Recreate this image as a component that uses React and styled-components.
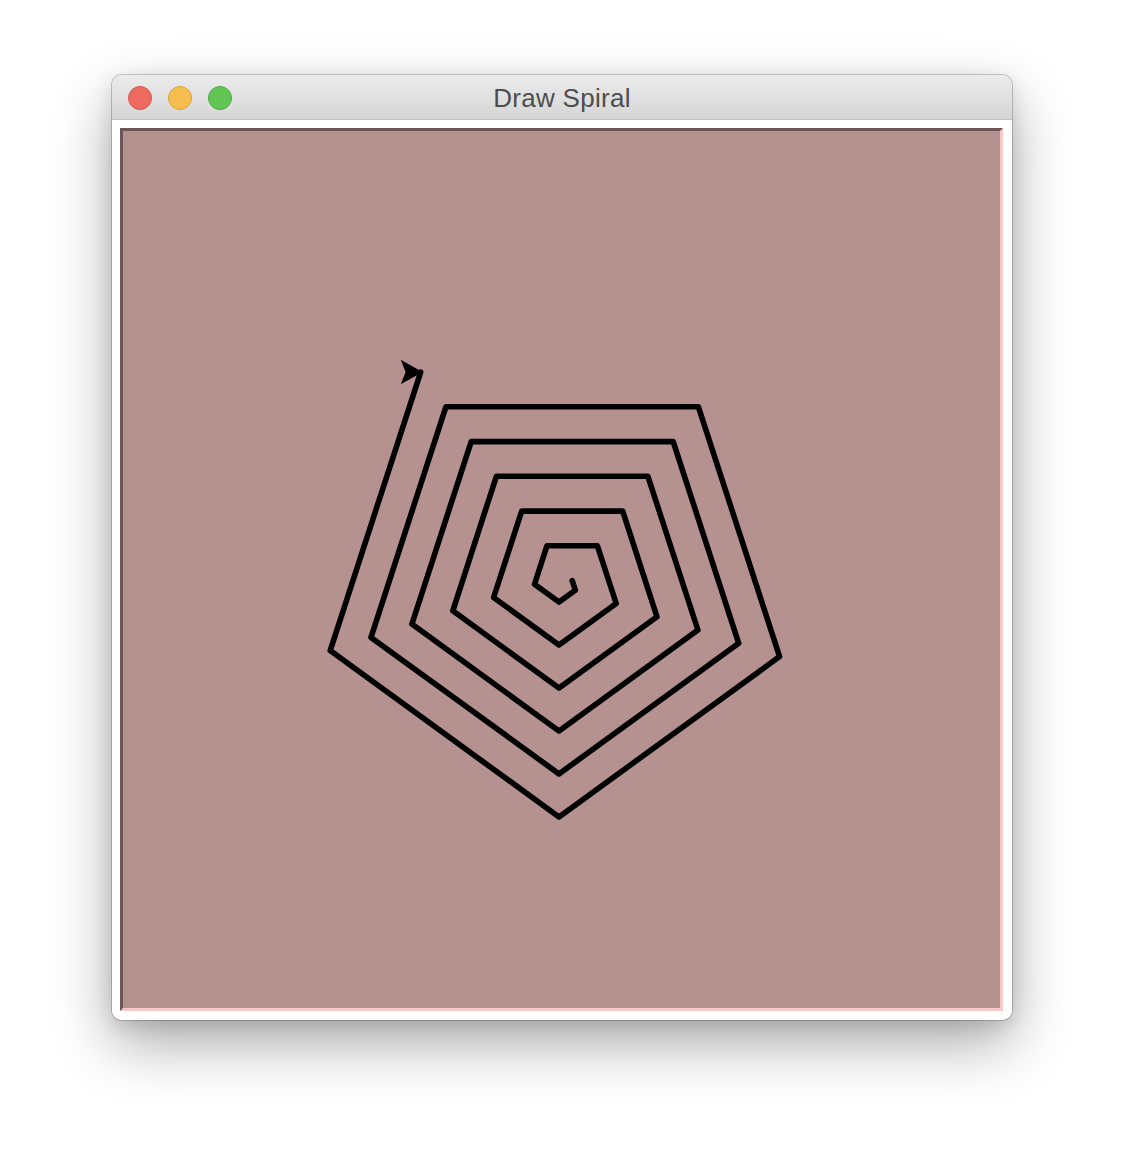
import React from "react";
import styled, { createGlobalStyle } from "styled-components";

const GlobalStyle = createGlobalStyle`
  html, body {
    margin: 0;
    padding: 0;
    background: #ffffff;
  }
`;

const Page = styled.div`
  width: 1124px;
  height: 1168px;
  padding-top: 75px;
  box-sizing: border-box;
`;

const Window = styled.div`
  width: 900px;
  margin: 0 auto;
  border-radius: 10px;
  overflow: hidden;
  background: #ffffff;
  box-shadow: 0 0 0 1px rgba(0, 0, 0, 0.2), 0 24px 60px rgba(0, 0, 0, 0.33),
    0 6px 20px rgba(0, 0, 0, 0.12);
`;

const TitleBar = styled.div`
  position: relative;
  height: 44px;
  display: flex;
  align-items: center;
  justify-content: center;
  background: linear-gradient(#ebebeb, #d5d5d5);
  border-bottom: 1px solid #c3c3c3;
`;

const Lights = styled.div`
  position: absolute;
  left: 16px;
  top: 11px;
  display: flex;
  gap: 16px;
`;

const Light = styled.span`
  width: 22px;
  height: 22px;
  border-radius: 50%;
  background: ${(p) => p.fill};
  border: 1px solid ${(p) => p.edge};
`;

const Title = styled.div`
  font-family: "Liberation Sans", Arial, sans-serif;
  font-size: 26px;
  color: #4d4d4d;
  letter-spacing: 0.3px;
  padding-top: 3px;
`;

const Content = styled.div`
  padding: 8px 9px 9px 8px;
  background: #ffffff;
`;

const Canvas = styled.div`
  width: 883px;
  height: 883px;
  box-sizing: border-box;
  background: #b5918f;
  border-style: solid;
  border-width: 3px;
  border-color: #6d5655 #f7c8c8 #f7c8c8 #6d5655;
`;

// turtle: forward(step * i) then right(72), for i = 1..29
const START = { x: 449.2, y: 449.6 };
const STEP = 10.1;

function spiralPoints() {
  const pts = [[START.x, START.y]];
  let { x, y } = START;
  for (let i = 1; i <= 29; i++) {
    const a = ((72 * i) * Math.PI) / 180;
    x += STEP * i * Math.cos(a);
    y += STEP * i * Math.sin(a);
    pts.push([x, y]);
  }
  return pts;
}

function Spiral() {
  const pts = spiralPoints();
  const [tx, ty] = pts[pts.length - 1];
  const line = pts.map(([x, y]) => `${x.toFixed(1)},${y.toFixed(1)}`).join(" ");
  const arrow = [
    [0, 0],
    [-18, -10],
    [-14, 0],
    [-18, 10],
  ]
    .map(([dx, dy]) => `${(tx + dx).toFixed(1)},${(ty + dy).toFixed(1)}`)
    .join(" ");

  return (
    <svg width="877" height="877" viewBox="0 0 877 877">
      <polyline
        points={line}
        fill="none"
        stroke="#000"
        strokeWidth="5.6"
        strokeLinejoin="round"
        strokeLinecap="round"
      />
      <polygon points={arrow} fill="#000" stroke="#000" strokeWidth="2" strokeLinejoin="miter" />
    </svg>
  );
}

export default function App() {
  return (
    <Page>
      <GlobalStyle />
      <Window>
        <TitleBar>
          <Lights>
            <Light fill="#ee6a5e" edge="#d5584c" />
            <Light fill="#f6be4f" edge="#dca23a" />
            <Light fill="#62c655" edge="#4ea842" />
          </Lights>
          <Title>Draw Spiral</Title>
        </TitleBar>
        <Content>
          <Canvas>
            <Spiral />
          </Canvas>
        </Content>
      </Window>
    </Page>
  );
}
